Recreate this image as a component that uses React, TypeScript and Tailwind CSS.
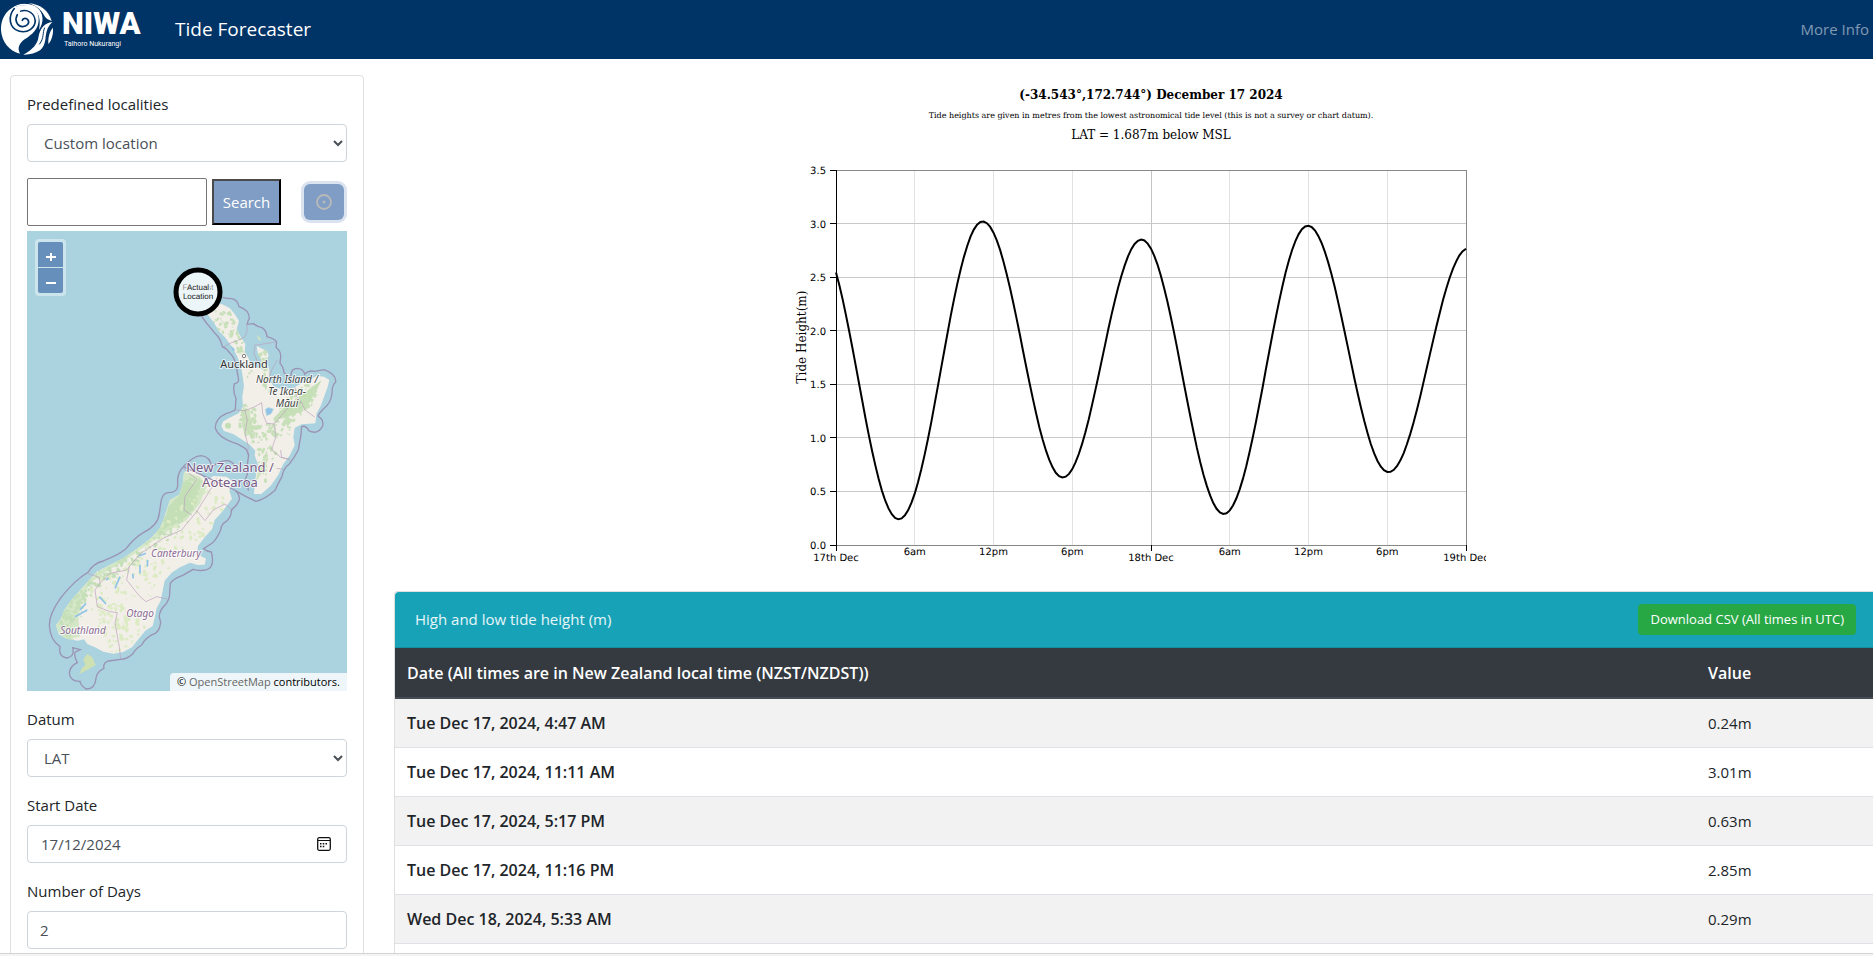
import { useState } from "react";
import type { ReactNode } from "react";

const tides = [
  { date: "Tue Dec 17, 2024, 4:47 AM", value: "0.24m" },
  { date: "Tue Dec 17, 2024, 11:11 AM", value: "3.01m" },
  { date: "Tue Dec 17, 2024, 5:17 PM", value: "0.63m" },
  { date: "Tue Dec 17, 2024, 11:16 PM", value: "2.85m" },
  { date: "Wed Dec 18, 2024, 5:33 AM", value: "0.29m" },
  { date: "Wed Dec 18, 2024, 11:57 AM", value: "2.98m" },
];

// [hours since start, height in metres]
const extrema = [
  [-1.4, 2.86],
  [4.78, 0.24],
  [11.18, 3.02],
  [17.28, 0.63],
  [23.27, 2.85],
  [29.55, 0.29],
  [35.95, 2.98],
  [42.1, 0.68],
  [48.2, 2.77],
];

const plot = { left: 50, top: 95, width: 630, height: 375 };
const xAt = (hour: number) => plot.left + (hour / 48) * plot.width;
const yAt = (height: number) => plot.top + plot.height - (height / 3.5) * plot.height;

function heightAt(hour: number) {
  const i = extrema.findIndex(([t]) => t > hour);
  const [t0, h0] = extrema[i - 1];
  const [t1, h1] = extrema[i];
  const phase = ((hour - t0) / (t1 - t0)) * Math.PI;
  return (h0 + h1) / 2 + ((h0 - h1) / 2) * Math.cos(phase);
}

const curve = Array.from({ length: 193 }, (_, i) => i / 4)
  .map((t) => `${xAt(t).toFixed(1)},${yAt(heightAt(t)).toFixed(1)}`)
  .join(" ");

const xTicks = ["17th Dec", "6am", "12pm", "6pm", "18th Dec", "6am", "12pm", "6pm", "19th Dec"];
const yTicks = [0, 0.5, 1, 1.5, 2, 2.5, 3, 3.5];

function TideChart() {
  return (
    <svg width="700" height="500" viewBox="0 0 700 500" className="block max-w-full" role="img" aria-label="Tide height chart">
      <g textAnchor="middle" className="font-['DejaVu_Serif',serif]">
        <text x="365" y="24" fontSize="12" fontWeight="bold">(-34.543°,172.744°) December 17 2024</text>
        <text x="365" y="43" fontSize="8" textRendering="geometricPrecision">
          Tide heights are given in metres from the lowest astronomical tide level (this is not a survey or chart datum).
        </text>
        <text x="365" y="64" fontSize="12">LAT = 1.687m below MSL</text>
        <text transform="translate(20 262) rotate(-90)" fontSize="12">Tide Height(m)</text>
      </g>
      <g shapeRendering="crispEdges">
        {xTicks.map((_, i) => (
          <line key={i} x1={xAt(i * 6)} x2={xAt(i * 6)} y1="95" y2="470" stroke={i === 4 ? "#c4c4c4" : "#e2e2e2"} />
        ))}
        {yTicks.map((v) => (
          <line key={v} x1="50" x2="680" y1={yAt(v)} y2={yAt(v)} stroke="#c8c8c8" />
        ))}
        <path d="M50 95H680V470H50" fill="none" stroke="#888" />
        <path d="M50 95V470" stroke="#000" />
        {yTicks.map((v) => (
          <line key={v} x1="44" x2="50" y1={yAt(v)} y2={yAt(v)} stroke="#000" />
        ))}
        {[0, 24, 48].map((h) => (
          <line key={h} x1={xAt(h)} x2={xAt(h)} y1="470" y2="476" stroke="#000" />
        ))}
      </g>
      <g fontSize="10" textRendering="geometricPrecision" className="font-['DejaVu_Sans',sans-serif]">
        {yTicks.map((v) => (
          <text key={v} x="40" y={yAt(v) + 4} textAnchor="end">{v.toFixed(1)}</text>
        ))}
        {xTicks.map((label, i) => (
          <text key={i} x={xAt(i * 6)} y={i % 4 === 0 ? 486 : 480} textAnchor="middle">{label}</text>
        ))}
      </g>
      <polyline points={curve} fill="none" stroke="#000" strokeWidth="2" />
    </svg>
  );
}

function Logo() {
  return (
    <svg width="145" height="59" viewBox="0 0 145 59" role="img" aria-label="NIWA Taihoro Nukurangi">
      <g transform="scale(.3333)">
        <path d="M43 20C17 32 2 58 3 90c2 36 26 64 57 71-9-16-3-31 14-43 24-16 43-32 42-62-1-26-20-43-45-40-12 1-22 4-28 4Z" fill="#fff" />
        <path d="M44 24c-22 26-16 60 12 69 26 8 50-8 50-34" fill="none" stroke="#036" strokeWidth="5" />
        <path d="M52 44c-9 16-1 34 14 36 15 1 24-11 18-20-5-7-15-6-17 1" fill="none" stroke="#036" strokeWidth="5" strokeLinecap="round" />
        <path d="M60 34c22-8 44 5 45 27" fill="none" stroke="#036" strokeWidth="4" />
        <path d="M33 27C55 5 92 4 112 22c20 19 20 46 5 68 5-26 2-48-15-62C84 13 58 13 33 27Z" fill="#fff" />
        <path d="M48 13c28-8 58-3 74 18 9 12 12 25 9 40" fill="none" stroke="#036" strokeWidth="4" />
        <path d="M85 9c38 3 62 25 70 54-10-4-18-8-22-16C124 29 108 17 85 9Z" fill="#fff" />
        <path d="M157 66c-23 2-37 20-41 43-3 23-17 40-46 55 17 1 37-4 50-13 12-11 16-25 17-41 2-19 8-33 20-44Z" fill="#fff" />
        <path d="M134 83c-7 16-1 31-16 50" fill="none" stroke="#036" strokeWidth="3" />
        <path d="M159 83c1 20-3 36-14 49-1-19 3-37 14-49Z" fill="#fff" />
      </g>
      <text x="62" y="34" fontSize="31" fontWeight="900" fill="#fff" className="font-['Roboto',sans-serif]">NIWA</text>
      <text x="64" y="46" fontSize="7" fill="#fff" className="font-['Roboto',sans-serif]">Taihoro Nukurangi</text>
    </svg>
  );
}

const northIsland =
  "M615 270L640 257 665 252 690 265 706 285 717 303 710 328 722 350 736 372 734 395 744 412 752 428 765 440 788 442 784 420 774 402 770 378 786 386 800 392 806 405 800 425 808 450 808 480 822 500 850 509 880 503 905 490 930 480 950 467 972 470 988 480 984 498 974 526 962 558 950 580 946 610 905 613 884 624 880 652 884 676 870 705 850 732 835 765 812 797 784 822 762 822 764 795 768 765 775 735 764 706 766 692 750 674 728 660 700 642 672 633 664 618 670 604 692 592 716 580 729 560 727 530 732 498 728 468 722 435 712 410 703 392 690 372 675 352 656 332 642 308 628 290Z";
const northLimit =
  "M668 232Q680 236 695 236 712 238 717 260 748 270 748 295 742 305 742 313L760 311Q775 322 786 323 800 332 801 350 824 356 830 366L828 382Q844 395 842 412L840 430Q850 440 852 458 862 470 873 468 872 445 893 445 912 447 914 463 925 450 945 454L972 449Q1010 462 1007 487 996 495 996 520 994 550 970 567 950 588 956 590 972 600 968 618 955 645 927 633 918 615 905 620L903 645 895 690Q885 710 868 732 850 745 846 770 832 795 826 810 795 838 768 844 740 832 706 812M745 812Q745 790 735 780 747 760 742 735L746 705Q742 690 735 685 715 672 700 668 655 652 646 625 645 595 680 580 700 575 706 568L708 535Q698 515 703 492 715 488 716 480L708 435Q702 410 690 400 680 385 667 380 662 355 645 340L622 312 604 288";
const southIsland =
  "M552 66L580 58 605 75 618 92 640 78 680 80 700 95 688 122 696 146 682 165 664 188 644 210 636 238 614 262 594 288 592 304 602 318 618 326 614 344 594 345 570 338 540 352 515 368 494 392 488 422 482 452 470 475 464 504 458 528 436 542 418 564 396 592 370 606 340 611 310 605 285 592 262 582 252 568 234 572 200 566 176 552 168 525 182 508 192 482 212 453 246 414 270 388 290 365 330 345 370 325 420 290 456 262 480 235 492 205 505 165 510 150 538 134 548 105Z";
const southLimit =
  "M550 50Q580 18 604 17 632 20 635 52 658 30 685 32 702 38 704 52M704 120Q722 135 717 152 710 168 694 180 696 200 678 215 664 222 662 240 650 268 636 280L611 296Q620 304 634 306 642 335 633 350 620 368 580 358L548 376Q520 386 511 400L509 430Q510 445 498 462 478 480 478 500L482 518Q478 550 458 553 435 565 425 585 405 598 398 612 380 628 362 628L325 633Q308 640 312 655 290 665 288 685 285 718 258 717 240 705 240 694 212 695 208 670 210 648 232 638 220 615 226 606L241 599 218 593Q225 620 200 624 175 620 180 590 150 570 148 525 148 490 185 440 225 390 265 366 280 340 310 333 355 315 376 298 405 262 430 248 475 225 478 190L484 150Q490 128 505 128 532 128 533 108L533 88Q535 65 550 50Z";

// Small deterministic scatter used for the bush cover on the map
function scatter(line: number[][], spread: number, count: number) {
  return Array.from({ length: count }, (_, i) => {
    const r = (k: number) => Math.abs(Math.sin((i + 1) * k) * 43758.5) % 1;
    const pos = r(12.98) * (line.length - 1);
    const n = Math.floor(pos);
    const f = pos - n;
    return {
      x: line[n][0] + (line[n + 1][0] - line[n][0]) * f + (r(78.2) - 0.5) * spread,
      y: line[n][1] + (line[n + 1][1] - line[n][1]) * f + (r(37.7) - 0.5) * spread,
      r: 2 + r(9.1) * 5,
    };
  });
}

const northBush = [
  ...scatter([[640, 275], [690, 310], [720, 370], [750, 480]], 60, 60),
  ...scatter([[780, 385], [795, 440], [810, 520]], 30, 30),
  ...scatter([[930, 500], [900, 550], [860, 590], [820, 640], [790, 760]], 60, 150),
  ...scatter([[740, 560], [745, 620], [780, 660]], 50, 60),
];
const southBush = [
  ...scatter([[580, 90], [560, 140], [530, 200], [480, 250], [400, 310]], 55, 170),
  ...scatter([[390, 320], [310, 370], [240, 440], [200, 510], [210, 550]], 50, 140),
];
const southGrass = [
  ...scatter([[640, 130], [560, 240], [450, 350], [350, 420], [300, 470]], 110, 140),
  ...scatter([[300, 480], [400, 520], [340, 590]], 90, 80),
];

type Blob = { x: number; y: number; r: number };

function Blobs({ items, fill }: { items: Blob[]; fill: string }) {
  return (
    <g fill={fill}>
      {items.map((b, i) => (
        <ellipse key={i} cx={b.x} cy={b.y} rx={b.r * 1.2} ry={b.r * 0.8} transform={`rotate(${(i * 37) % 180} ${b.x} ${b.y})`} />
      ))}
    </g>
  );
}

function MapArt() {
  return (
    <svg viewBox="0 0 320 460" className="block h-auto w-full" role="img" aria-label="Map of New Zealand">
      <defs>
        <clipPath id="north"><path d={northIsland} /></clipPath>
        <clipPath id="south"><path d={southIsland} /></clipPath>
      </defs>
      <rect width="320" height="460" fill="#aad3df" />
      <g transform="translate(-27 -11) scale(.3333)">
        <path d={northIsland} fill="#f2efe9" />
        <g clipPath="url(#north)">
          <path d="M965 480L925 510 880 545 850 565 825 590 815 640 825 600 860 592 900 575 930 545 955 500Z" fill="#c3dfb4" />
          <path d="M730 560L750 570 755 640 735 650 725 610ZM800 690L775 750 765 790 785 760 805 720Z" fill="#cfe3c0" />
          <Blobs items={northBush} fill="#c8e0b9" />
          <circle cx="684" cy="617" r="9" fill="#c3dfb4" />
        </g>
        <path d="M797 568L806 563 820 568 812 582 800 586ZM690 375L704 388 700 396M742 405L758 402M768 440L788 447" fill="#8fc4e8" stroke="#aad3df" strokeWidth="3" />
        <path d="M770 345L780 352 784 362 776 360Z" fill="#cfe3c0" />
        <g fill="none" stroke="#b9a0bb" strokeWidth="2">
          <path d="M668 382L690 370 712 362 735 350 742 330 740 313M828 366L790 372 765 376 762 400 772 425M832 420L815 450 805 480M706 570L735 572 742 600 735 640 745 680 742 705M735 572L765 560 785 548 788 580 800 610 822 612 850 580 875 550 905 548 915 570 945 592M822 612L828 650 815 688 842 712 870 718M885 500L890 530 905 548" />
        </g>
        <path d={northLimit} fill="none" stroke="#9a93b4" strokeWidth="4" />
        <circle cx="732" cy="408" r="5" fill="#fff" stroke="#444" strokeWidth="2" />
      </g>
      <g transform="translate(-27 219) scale(.3333)">
        <path d={southIsland} fill="#f2efe9" />
        <g clipPath="url(#south)">
          <path d="M552 66L600 80 620 110 600 160 560 210 510 240 440 285 370 335 310 370 270 400 250 440 235 500 240 560 180 570 160 520 250 400 400 290 490 200 500 150Z" fill="#d3e6c6" />
          <path d="M560 90L590 110 590 160 560 200 525 215 490 240 505 170 540 135Z" fill="#c3dfb6" />
          <Blobs items={southBush} fill="#c5dfb8" />
          <Blobs items={southGrass} fill="#dcebc4" />
        </g>
        <path d="M262 612L277 622 287 645 268 656 238 672 246 655 256 646 250 628Z" fill="#cfe0b2" />
        <g fill="none" stroke="#8fc4e8" strokeWidth="5">
          <path d="M418 318L438 310M420 345V370M443 330L442 350M398 372L400 385M360 380L345 415M298 440L318 462M258 460L240 480M262 480L225 500" />
          <path d="M318 390L326 384" />
        </g>
        <g fill="none" stroke="#b9a0bb" strokeWidth="2">
          <path d="M262 370L298 382 300 400 330 370 380 360 420 312 490 265 545 240 590 185 640 105 650 85M550 55L590 88 555 140 552 180 575 195M590 182L615 212 640 180 675 162 700 182M388 350L380 390 420 440 438 455 470 440 502 447M298 402L285 420 292 470 330 485 352 488 345 520 358 590 362 628M842 0L845 22 870 30M830 55L850 58" />
        </g>
        <path d={southLimit} fill="none" stroke="#9a93b4" strokeWidth="4" />
      </g>
      <g
        textAnchor="middle"
        stroke="#fff"
        strokeOpacity=".7"
        strokeWidth="2"
        strokeLinejoin="round"
        style={{ paintOrder: "stroke" }}
        className="font-['Noto_Sans',sans-serif]"
      >
        <text x="217" y="137" fontSize="11" fill="#333">Auckland</text>
        <g fontSize="10" fontStyle="italic" fill="#444">
          <text x="260" y="152">North Island /</text>
          <text x="260" y="164">Te Ika-a-</text>
          <text x="260" y="176">Māui</text>
        </g>
        <g fontSize="13" fill="#7a5a85">
          <text x="203" y="241">New Zealand /</text>
          <text x="203" y="256">Aotearoa</text>
        </g>
        <g fontSize="10" fontStyle="italic" fill="#8d6b96">
          <text x="149" y="326">Canterbury</text>
          <text x="113" y="386">Otago</text>
          <text x="56" y="403">Southland</text>
        </g>
      </g>
      <circle cx="171" cy="61" r="22" fill="#fff" fillOpacity=".78" stroke="#000" strokeWidth="5" />
      <g textAnchor="middle" fontSize="8" textRendering="geometricPrecision" className="font-['Liberation_Sans',sans-serif]">
        <text x="171" y="59" fill="#999">Forecast</text>
        <text x="171" y="59" fill="#222" stroke="#eef5f8" strokeWidth="2" style={{ paintOrder: "stroke" }}>Actual</text>
        <text x="171" y="68" fill="#222">Location</text>
      </g>
    </svg>
  );
}

const controlCls =
  "h-[38px] w-full rounded border border-[#ced4da] bg-white px-3 text-[15px] leading-6 text-[#495057] outline-none";

function Field({ id, label, children }: { id: string; label: string; children: ReactNode }) {
  return (
    <div className="mb-4">
      <label htmlFor={id} className="mb-2 block leading-6">{label}</label>
      {children}
    </div>
  );
}

export default function App() {
  const [place, setPlace] = useState("");
  const [date, setDate] = useState("17/12/2024");
  const [days, setDays] = useState("2");

  return (
    <div className="flex h-screen flex-col bg-[#f4f4f4] font-['Open_Sans','Noto_Sans',sans-serif] text-[15px] text-[#212529]">
      <div className="min-h-0 flex-1 overflow-hidden border-b border-[#d4d4d4] bg-white">
        <nav className="flex h-[59px] items-center bg-[#003366]">
          <a href="#" className="mr-[30px]"><Logo /></a>
          <a href="#" className="text-[19px] text-white">Tide Forecaster</a>
          <a href="#" className="mr-1 ml-auto text-white/50">More Info</a>
        </nav>

        <div className="flex items-start pt-4">
          <aside className="ml-[10px] w-[354px] shrink-0 rounded border border-[#dfdfdf] p-4">
            <Field id="locality" label="Predefined localities">
              <select id="locality" className={controlCls}>
                <option>Custom location</option>
              </select>
            </Field>

            <div className="mb-[5px] flex items-center">
              <input
                aria-label="Search location"
                value={place}
                onChange={(e) => setPlace(e.target.value)}
                className="h-12 w-[180px] rounded-xs border border-[#767676] px-2 outline-none"
              />
              <button className="ml-[5px] h-[46px] w-[69px] border-2 border-t-[#4a4a4a] border-r-black border-b-black border-l-[#4a4a4a] bg-[#809dc5] text-white">
                Search
              </button>
              <button
                aria-label="Use my location"
                className="mr-[3px] ml-auto flex h-9 w-10 items-center justify-center rounded-md bg-[#809dc5] ring-3 ring-[#dae3ef]"
              >
                <svg width="16" height="16" viewBox="0 0 16 16" fill="none">
                  <circle cx="8" cy="8" r="7" stroke="#b9b9b9" strokeWidth="1.8" />
                  <circle cx="8" cy="8" r="1.5" fill="#b9b9b9" />
                </svg>
              </button>
            </div>

            <div className="relative mb-4">
              <MapArt />
              <div className="absolute top-2 left-2 flex flex-col gap-px rounded bg-white/40 p-[3px]">
                <button aria-label="Zoom in" className="flex h-[25px] w-[25px] items-center justify-center rounded-t-xs bg-[#6690bb] pt-1">
                  <svg width="10" height="10" viewBox="0 0 10 10" stroke="#fff" strokeWidth="2"><path d="M0 5H10M5 1V9" /></svg>
                </button>
                <button aria-label="Zoom out" className="flex h-[25px] w-[25px] items-center justify-center rounded-b-xs bg-[#6690bb] pt-1">
                  <svg width="10" height="10" viewBox="0 0 10 10" stroke="#fff" strokeWidth="2"><path d="M0 5H10" /></svg>
                </button>
              </div>
              <div className="absolute right-0 bottom-0 rounded-tl bg-white/80 px-[7px] text-[11px] leading-[18px] text-black">
                © <a href="#" className="text-[#666]">OpenStreetMap</a> contributors.
              </div>
            </div>

            <Field id="datum" label="Datum">
              <select id="datum" className={controlCls}>
                <option>LAT</option>
              </select>
            </Field>

            <Field id="start" label="Start Date">
              <div className="flex h-[38px] items-center rounded border border-[#ced4da] px-[13px]">
                <input
                  id="start"
                  value={date}
                  onChange={(e) => setDate(e.target.value)}
                  className="min-w-0 flex-1 text-[#495057] outline-none"
                />
                <button aria-label="Open calendar" className="mr-0.5">
                  <svg width="14" height="14" viewBox="0 0 14 14" className="block" fill="none" stroke="#111">
                    <rect x=".7" y=".7" width="12.6" height="12.6" rx="1.5" strokeWidth="1.3" />
                    <path d="M1 3.5H13" />
                    <path d="M3 9.5H4.5M5.75 9.5H7.25M3 6.8H4.5M5.75 6.8H7.25M8.5 6.8H10" strokeWidth="1.5" />
                  </svg>
                </button>
              </div>
            </Field>

            <Field id="days" label="Number of Days">
              <input id="days" value={days} onChange={(e) => setDays(e.target.value)} className={controlCls} />
            </Field>
          </aside>

          <main className="ml-[30px] min-w-0 flex-1">
            <div className="mb-4 flex justify-center pl-[5px]">
              <TideChart />
            </div>

            <section className="rounded-tl border-t border-l border-[#dfdfdf]">
              <header className="flex items-center justify-between rounded-tl border-b border-[#148ea1] bg-[#17a2b8] py-3 pr-[17px] pl-5 text-white/90">
                <span>High and low tide height (m)</span>
                <button className="h-[31px] rounded bg-[#28a745] px-3 text-[13px] text-white">Download CSV (All times in UTC)</button>
              </header>
              <table className="w-full text-left leading-6">
                <thead>
                  <tr className="h-[50px] border-b-2 border-[#454d55] bg-[#343a40] text-white">
                    <th className="px-3 text-base font-semibold">Date (All times are in New Zealand local time (NZST/NZDST))</th>
                    <th className="w-[177px] px-3 text-base font-semibold">Value</th>
                  </tr>
                </thead>
                <tbody>
                  {tides.map((tide) => (
                    <tr key={tide.date} className="h-[49px] border-b border-[#dee2e6] odd:bg-[#f2f2f2]">
                      <th className="px-3 text-base font-semibold">{tide.date}</th>
                      <td className="px-3">{tide.value}</td>
                    </tr>
                  ))}
                </tbody>
              </table>
            </section>
          </main>
        </div>
      </div>
      <div className="h-[2px] shrink-0" />
    </div>
  );
}
